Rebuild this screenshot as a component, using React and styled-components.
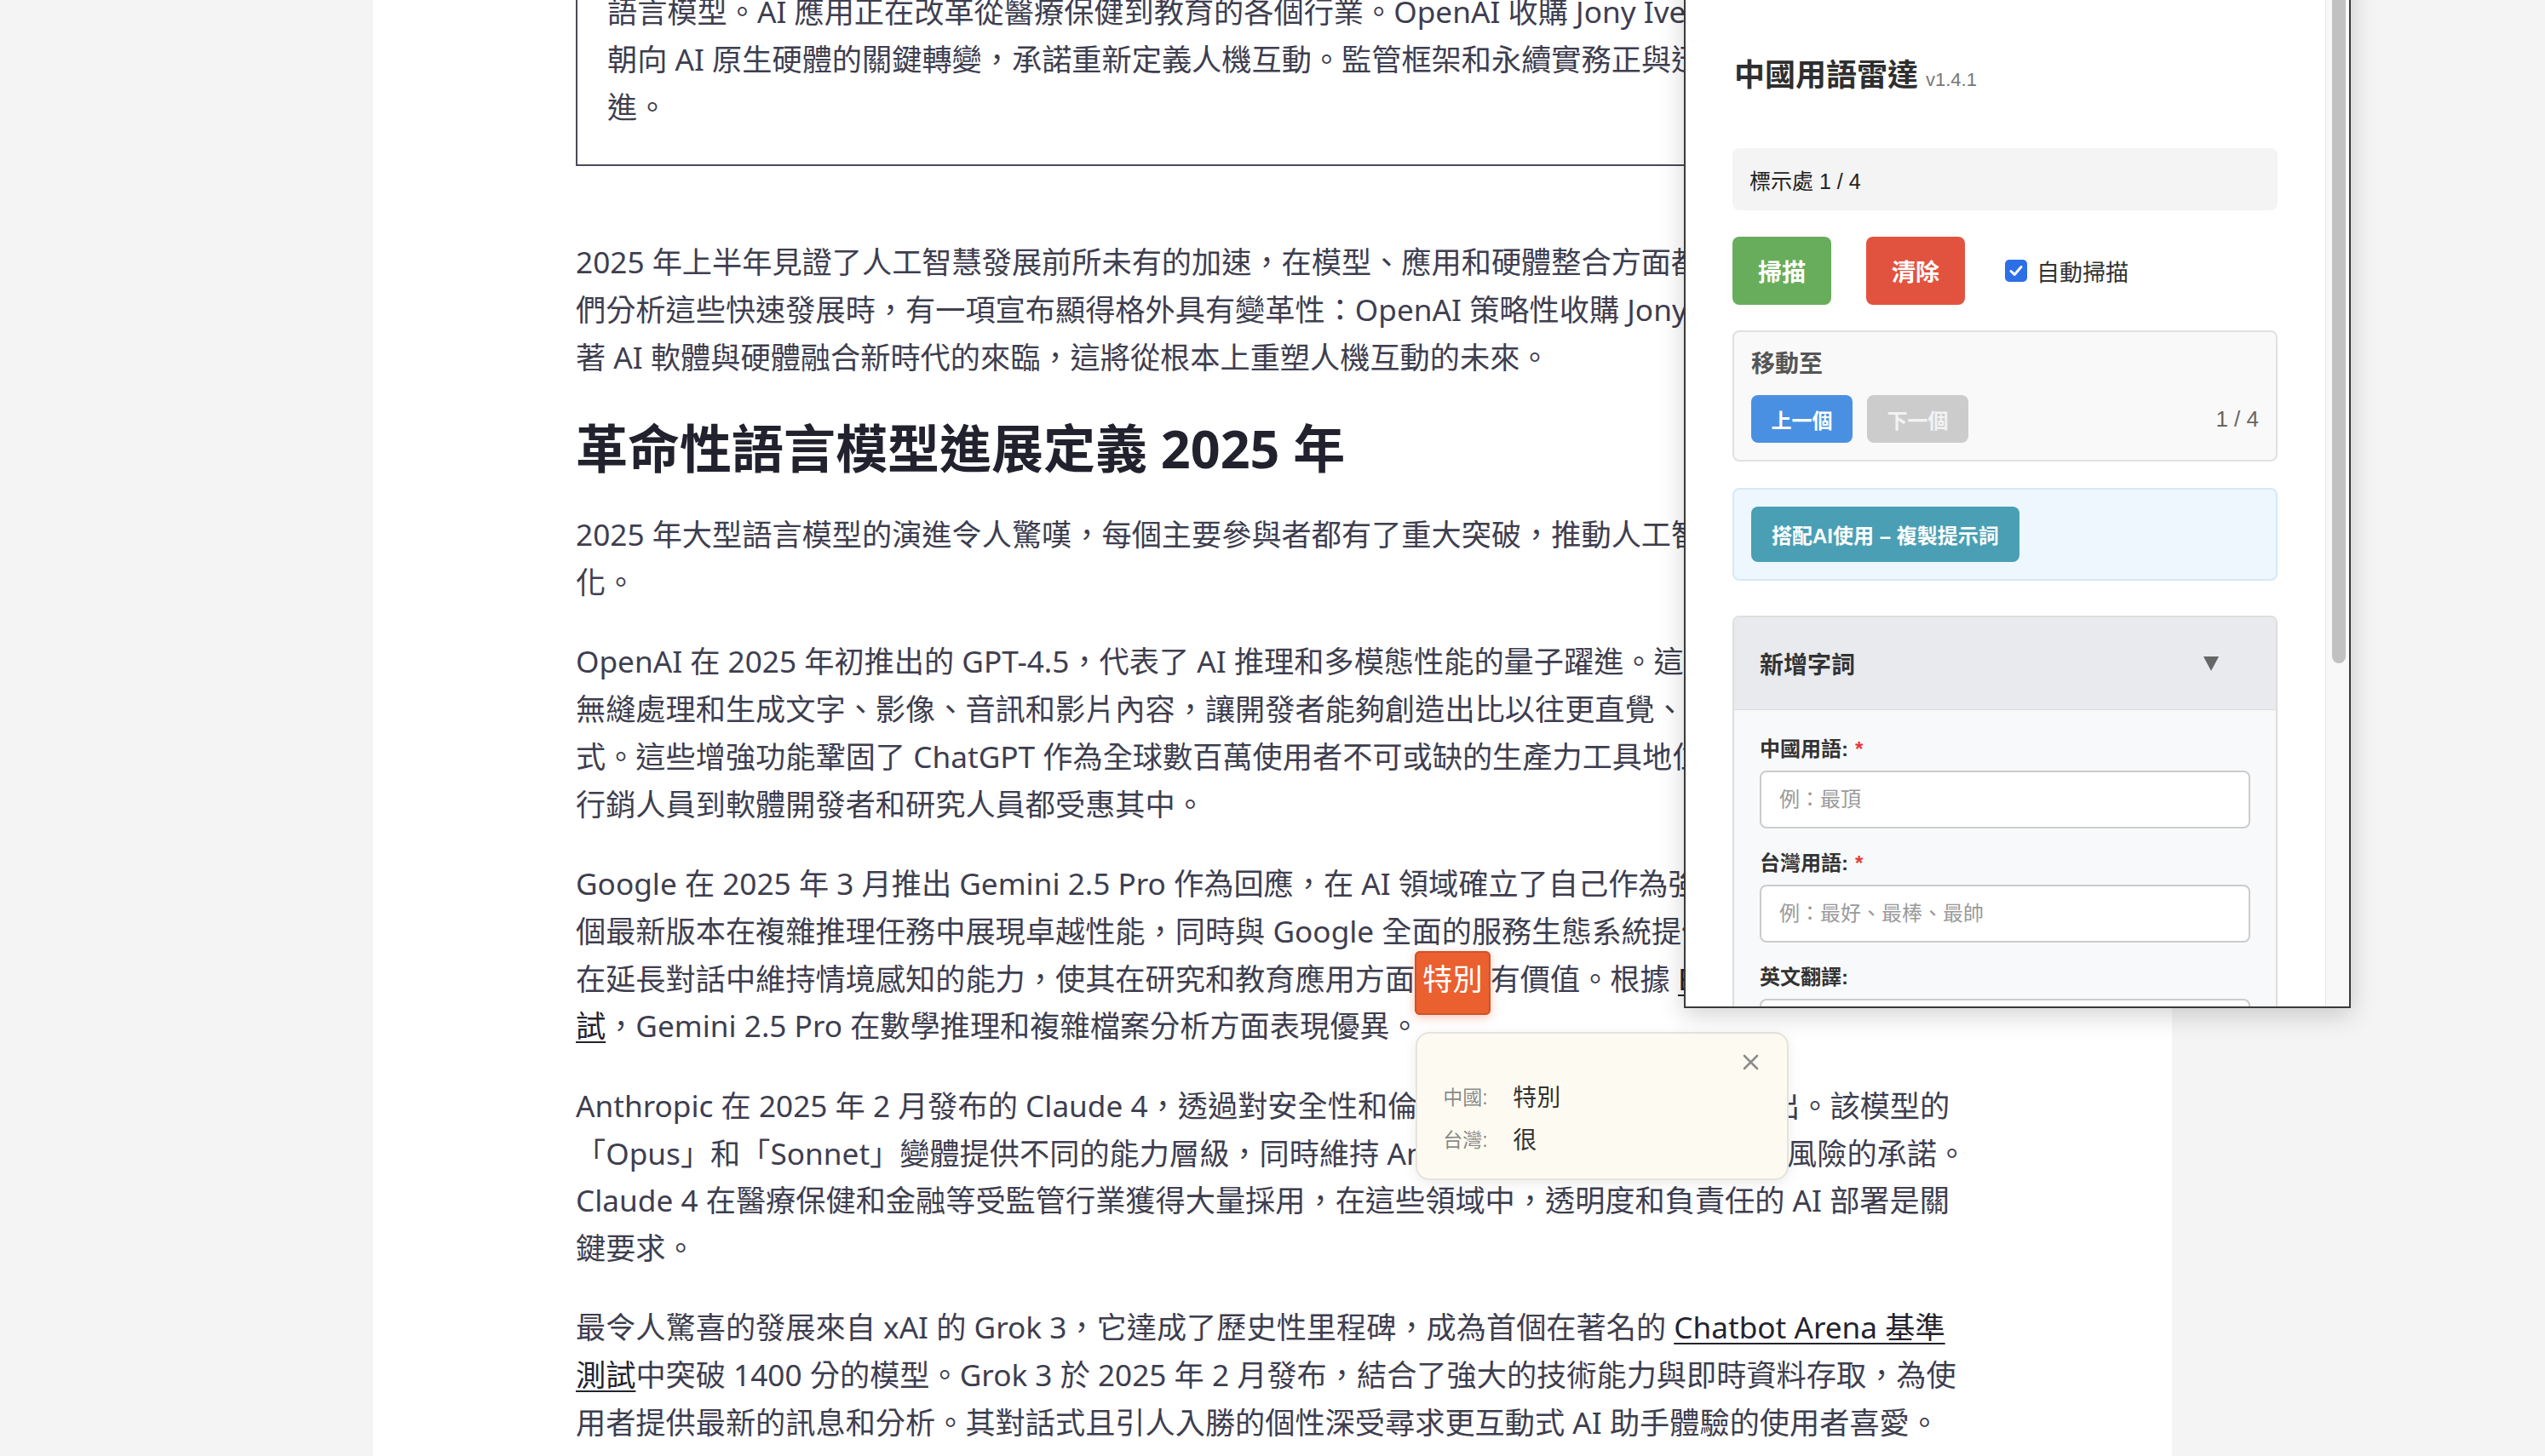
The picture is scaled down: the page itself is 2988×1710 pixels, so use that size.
import React from 'react';
import styled, { createGlobalStyle } from 'styled-components';

const GlobalStyle = createGlobalStyle`
  html, body { margin: 0; padding: 0; }
  body {
    background: #f4f4f4;
    overflow: hidden;
    font-family: "Noto Sans", "Noto Sans CJK TC", sans-serif;
  }
  * { box-sizing: border-box; }
`;

const Page = styled.div`
  position: relative;
  width: 100%;
  height: 1710px;
  overflow: hidden;
  display: flex;
  justify-content: center;
`;

const Column = styled.main`
  width: 2112px;
  flex-shrink: 0;
  min-height: 1710px;
  background: #ffffff;
  padding: 0 200px 0 238px;
`;

const Article = styled.article`
  margin-top: -62px;
  font-family: "Noto Sans", "Noto Sans CJK TC", sans-serif;
  font-size: 35.2px;
  line-height: 55.8px;
  color: #3e3e4f;
`;

const Quote = styled.blockquote`
  margin: 0 0 85px;
  padding: 46px 36px 40px 35px;
  border: 2px solid #4a4a5a;
`;

const Para = styled.p`
  margin: 0 0 37.5px;
`;

const Heading = styled.h2`
  margin: 39.5px 0 33px;
  font-size: 61px;
  line-height: 80px;
  font-weight: 700;
  color: #22222e;
`;

const Link = styled.a`
  color: #23232f;
  text-decoration: underline;
  text-decoration-thickness: 2px;
  text-underline-offset: 5px;
`;

const Mark = styled.span`
  position: relative;
  padding: 6px 7px 17px;
  border: 2px solid #d0522a;
  border-radius: 6px;
  background: #ea602f;
  color: #ffffff;
  box-shadow: 0 3px 12px rgba(234, 96, 47, 0.35);
`;

const Popover = styled.span`
  position: absolute;
  left: -1px;
  top: calc(100% + 22px);
  display: block;
  width: 438px;
  padding: 48px 30px 22px;
  background: #fdfbf1;
  border: 2px solid #e5e3dc;
  border-radius: 16px;
  box-shadow: 0 4px 16px rgba(0, 0, 0, 0.08);
  font-family: "Liberation Sans", "Noto Sans CJK TC", sans-serif;
  color: #333333;
  line-height: normal;
  z-index: 5;
`;

const CloseIcon = styled.svg`
  position: absolute;
  top: 24px;
  right: 33px;
  width: 19px;
  height: 19px;
`;

const PopRow = styled.span`
  display: grid;
  grid-template-columns: 82px auto;
  align-items: center;
  height: 50px;
`;

const PopLabel = styled.span`
  font-size: 23px;
  color: #8a8a8a;
`;

const PopValue = styled.span`
  font-size: 28px;
  color: #333333;
`;

/* ---------- Panel ---------- */

const Panel = styled.aside`
  position: absolute;
  top: -40px;
  left: 1977px;
  width: 783px;
  height: 1224px;
  display: flex;
  overflow: hidden;
  background: #ffffff;
  border: 2px solid #3a3a3a;
  box-shadow: 0 8px 28px rgba(0, 0, 0, 0.18);
  font-family: "Liberation Sans", "Noto Sans CJK TC", sans-serif;
  color: #333333;
  z-index: 10;
`;

const PanelBody = styled.div`
  flex: 1;
  min-width: 0;
  padding: 102px 56px 0 55px;
  overflow: hidden;
`;

const ScrollTrack = styled.div`
  width: 28px;
  flex-shrink: 0;
  background: #f8f8f8;
  border-left: 1px solid #e6e6e6;
`;

const ScrollThumb = styled.div`
  width: 16px;
  height: 815px;
  margin: 2px 0 0 7px;
  border-radius: 8px;
  background: #c1c1c1;
`;

const TitleRow = styled.div`
  display: flex;
  align-items: baseline;
  gap: 9px;
  padding-left: 2px;
  height: 50px;
`;

const Title = styled.h1`
  margin: 0;
  font-size: 36px;
  line-height: 50px;
  font-weight: 700;
  color: #2f2f2f;
`;

const Version = styled.span`
  font-size: 22px;
  color: #777777;
`;

const CounterBox = styled.div`
  margin-top: 60px;
  height: 73px;
  display: flex;
  align-items: center;
  padding: 0 20px;
  border-radius: 8px;
  background: #f4f4f4;
  font-size: 25px;
  color: #222222;
`;

const ActionRow = styled.div`
  margin-top: 31px;
  display: flex;
  align-items: center;
  gap: 41px;
`;

const ActionButton = styled.button`
  width: 116px;
  height: 80px;
  border: none;
  border-radius: 8px;
  background: ${(p) => (p.$tone === 'red' ? '#e2533f' : '#68ad5b')};
  color: #ffffff;
  font-family: inherit;
  font-size: 28px;
  font-weight: 700;
`;

const CheckLabel = styled.label`
  margin-left: 6px;
  display: flex;
  align-items: center;
  gap: 11px;
  font-size: 27px;
  color: #333333;
`;

const CheckBox = styled.span`
  width: 26px;
  height: 26px;
  border-radius: 5px;
  background: #2d6fe6;
  display: inline-flex;
  align-items: center;
  justify-content: center;
`;

const Section = styled.section`
  margin-top: ${(p) => p.$gap}px;
  border: 2px solid ${(p) => p.$border};
  border-radius: 8px;
  background: ${(p) => p.$bg};
  padding: ${(p) => p.$pad};
`;

const SectionTitle = styled.h3`
  margin: 0 0 16px;
  font-size: 28px;
  line-height: 40px;
  font-weight: 700;
  color: #555555;
`;

const NavRow = styled.div`
  display: flex;
  align-items: center;
  gap: 17px;
`;

const NavButton = styled.button`
  width: 119px;
  height: 56px;
  border: none;
  border-radius: 8px;
  background: ${(p) => (p.$off ? '#cccccc' : '#4a90e2')};
  color: ${(p) => (p.$off ? '#f3f3f3' : '#ffffff')};
  font-family: inherit;
  font-size: 24px;
  font-weight: 700;
`;

const NavCount = styled.span`
  margin-left: auto;
  font-size: 26px;
  color: #666666;
`;

const AiButton = styled.button`
  display: block;
  height: 65px;
  padding: 0 24px;
  border: none;
  border-radius: 8px;
  background: #4a9fb4;
  color: #ffffff;
  font-family: inherit;
  font-size: 24px;
  font-weight: 700;
`;

const Accordion = styled.section`
  margin-top: 41px;
  border: 2px solid #dedede;
  border-radius: 8px 8px 0 0;
  overflow: hidden;
`;

const AccordionHeader = styled.div`
  height: 109px;
  display: flex;
  align-items: center;
  justify-content: space-between;
  padding: 0 67px 0 30px;
  background: #e8eaed;
  border-bottom: 1px solid #dcdcdc;
`;

const AccordionTitle = styled.span`
  font-size: 28px;
  font-weight: 700;
  color: #333333;
`;

const AccordionBody = styled.div`
  background: #f8f9fa;
  padding: 29px 30px 30px;
  display: flex;
  flex-direction: column;
  gap: 24px;
`;

const Field = styled.div`
  display: flex;
  flex-direction: column;
  gap: 8px;
`;

const FieldLabel = styled.label`
  font-size: 24px;
  line-height: 34px;
  font-weight: 700;
  color: #333333;
`;

const Required = styled.span`
  margin-left: 8px;
  color: #e53935;
`;

const TextInput = styled.input`
  flex-shrink: 0;
  width: 100%;
  height: 68px;
  padding: 0 21px;
  border: 2px solid #cccccc;
  border-radius: 8px;
  background: #ffffff;
  font-family: inherit;
  font-size: 24px;
  color: #333333;
  &::placeholder { color: #9a9a9a; }
`;

export default function App() {
  return (
    <>
      <GlobalStyle />
      <Page lang="zh-Hant">
        <Column>
          <Article>
            <Quote>
              語言模型。AI 應用正在改革從醫療保健到教育的各個行業。OpenAI 收購 Jony Ive 的 io，標誌著<br />
              朝向 AI 原生硬體的關鍵轉變，承諾重新定義人機互動。監管框架和永續實務正與迅速發展同步演<br />
              進。
            </Quote>

            <Para>
              2025 年上半年見證了人工智慧發展前所未有的加速，在模型、應用和硬體整合方面都有重大突破。當我<br />
              們分析這些快速發展時，有一項宣布顯得格外具有變革性：OpenAI 策略性收購 Jony Ive 的 io，象徵<br />
              著 AI 軟體與硬體融合新時代的來臨，這將從根本上重塑人機互動的未來。
            </Para>

            <Heading>革命性語言模型進展定義 2025 年</Heading>

            <Para>
              2025 年大型語言模型的演進令人驚嘆，每個主要參與者都有了重大突破，推動人工智慧的邊界與應用變<br />
              化。
            </Para>

            <Para>
              OpenAI 在 2025 年初推出的 GPT-4.5，代表了 AI 推理和多模態性能的量子躍進。這個增強模型能夠<br />
              無縫處理和生成文字、影像、音訊和影片內容，讓開發者能夠創造出比以往更直覺、更強大的應用程<br />
              式。這些增強功能鞏固了 ChatGPT 作為全球數百萬使用者不可或缺的生產力工具地位，從<br />
              行銷人員到軟體開發者和研究人員都受惠其中。
            </Para>

            <Para>
              Google 在 2025 年 3 月推出 Gemini 2.5 Pro 作為回應，在 AI 領域確立了自己作為強大對手的地位。這<br />
              個最新版本在複雜推理任務中展現卓越性能，同時與 Google 全面的服務生態系統提供整合，並具備<br />
              在延長對話中維持情境感知的能力，使其在研究和教育應用方面
              <Mark>
                特別
                <Popover>
                  <CloseIcon viewBox="0 0 19 19" aria-label="關閉">
                    <path d="M2 2 L17 17 M17 2 L2 17" stroke="#8c8c8c" strokeWidth="2.6" strokeLinecap="round" />
                  </CloseIcon>
                  <PopRow>
                    <PopLabel>中國:</PopLabel>
                    <PopValue>特別</PopValue>
                  </PopRow>
                  <PopRow>
                    <PopLabel>台灣:</PopLabel>
                    <PopValue>很</PopValue>
                  </PopRow>
                </Popover>
              </Mark>
              有價值。根據 <Link href="#">ELO 排行榜基準測<br />試</Link>，Gemini 2.5 Pro 在數學推理和複雜檔案分析方面表現優異。
            </Para>

            <Para>
              Anthropic 在 2025 年 2 月發布的 Claude 4，透過對安全性和倫理 AI 開發的 重視而脫穎而出。該模型的<br />
              「Opus」和「Sonnet」變體提供不同的能力層級，同時維持 Anthropic 對負責任 AI 與降低風險的承諾。<br />
              Claude 4 在醫療保健和金融等受監管行業獲得大量採用，在這些領域中，透明度和負責任的 AI 部署是關<br />
              鍵要求。
            </Para>

            <Para>
              最令人驚喜的發展來自 xAI 的 Grok 3，它達成了歷史性里程碑，成為首個在著名的 <Link href="#">Chatbot Arena 基準<br />測試</Link>中突破 1400 分的模型。Grok 3 於 2025 年 2 月發布，結合了強大的技術能力與即時資料存取，為使<br />
              用者提供最新的訊息和分析。其對話式且引人入勝的個性深受尋求更互動式 AI 助手體驗的使用者喜愛。
            </Para>
          </Article>
        </Column>

        <Panel>
          <PanelBody>
            <TitleRow>
              <Title>中國用語雷達</Title>
              <Version>v1.4.1</Version>
            </TitleRow>

            <CounterBox>標示處 1 / 4</CounterBox>

            <ActionRow>
              <ActionButton $tone="green">掃描</ActionButton>
              <ActionButton $tone="red">清除</ActionButton>
              <CheckLabel>
                <CheckBox role="checkbox" aria-checked="true">
                  <svg width="18" height="18" viewBox="0 0 18 18">
                    <path d="M3 9.5 L7.2 13.5 L15 4.5" fill="none" stroke="#ffffff" strokeWidth="3" strokeLinecap="round" strokeLinejoin="round" />
                  </svg>
                </CheckBox>
                自動掃描
              </CheckLabel>
            </ActionRow>

            <Section $gap={30} $border="#e1e1e1" $bg="#f9f9f9" $pad="18px 20px 20px">
              <SectionTitle>移動至</SectionTitle>
              <NavRow>
                <NavButton>上一個</NavButton>
                <NavButton $off>下一個</NavButton>
                <NavCount>1 / 4</NavCount>
              </NavRow>
            </Section>

            <Section $gap={31} $border="#d5e9f6" $bg="#eef7fd" $pad="20px">
              <AiButton>搭配AI使用 – 複製提示詞</AiButton>
            </Section>

            <Accordion>
              <AccordionHeader>
                <AccordionTitle>新增字詞</AccordionTitle>
                <svg width="18" height="18" viewBox="0 0 18 18">
                  <polygon points="0,1 18,1 9,18" fill="#666666" />
                </svg>
              </AccordionHeader>
              <AccordionBody>
                <Field>
                  <FieldLabel>中國用語:<Required>*</Required></FieldLabel>
                  <TextInput placeholder="例：最頂" />
                </Field>
                <Field>
                  <FieldLabel>台灣用語:<Required>*</Required></FieldLabel>
                  <TextInput placeholder="例：最好、最棒、最帥" />
                </Field>
                <Field>
                  <FieldLabel>英文翻譯:</FieldLabel>
                  <TextInput />
                </Field>
              </AccordionBody>
            </Accordion>
          </PanelBody>
          <ScrollTrack>
            <ScrollThumb />
          </ScrollTrack>
        </Panel>
      </Page>
    </>
  );
}
